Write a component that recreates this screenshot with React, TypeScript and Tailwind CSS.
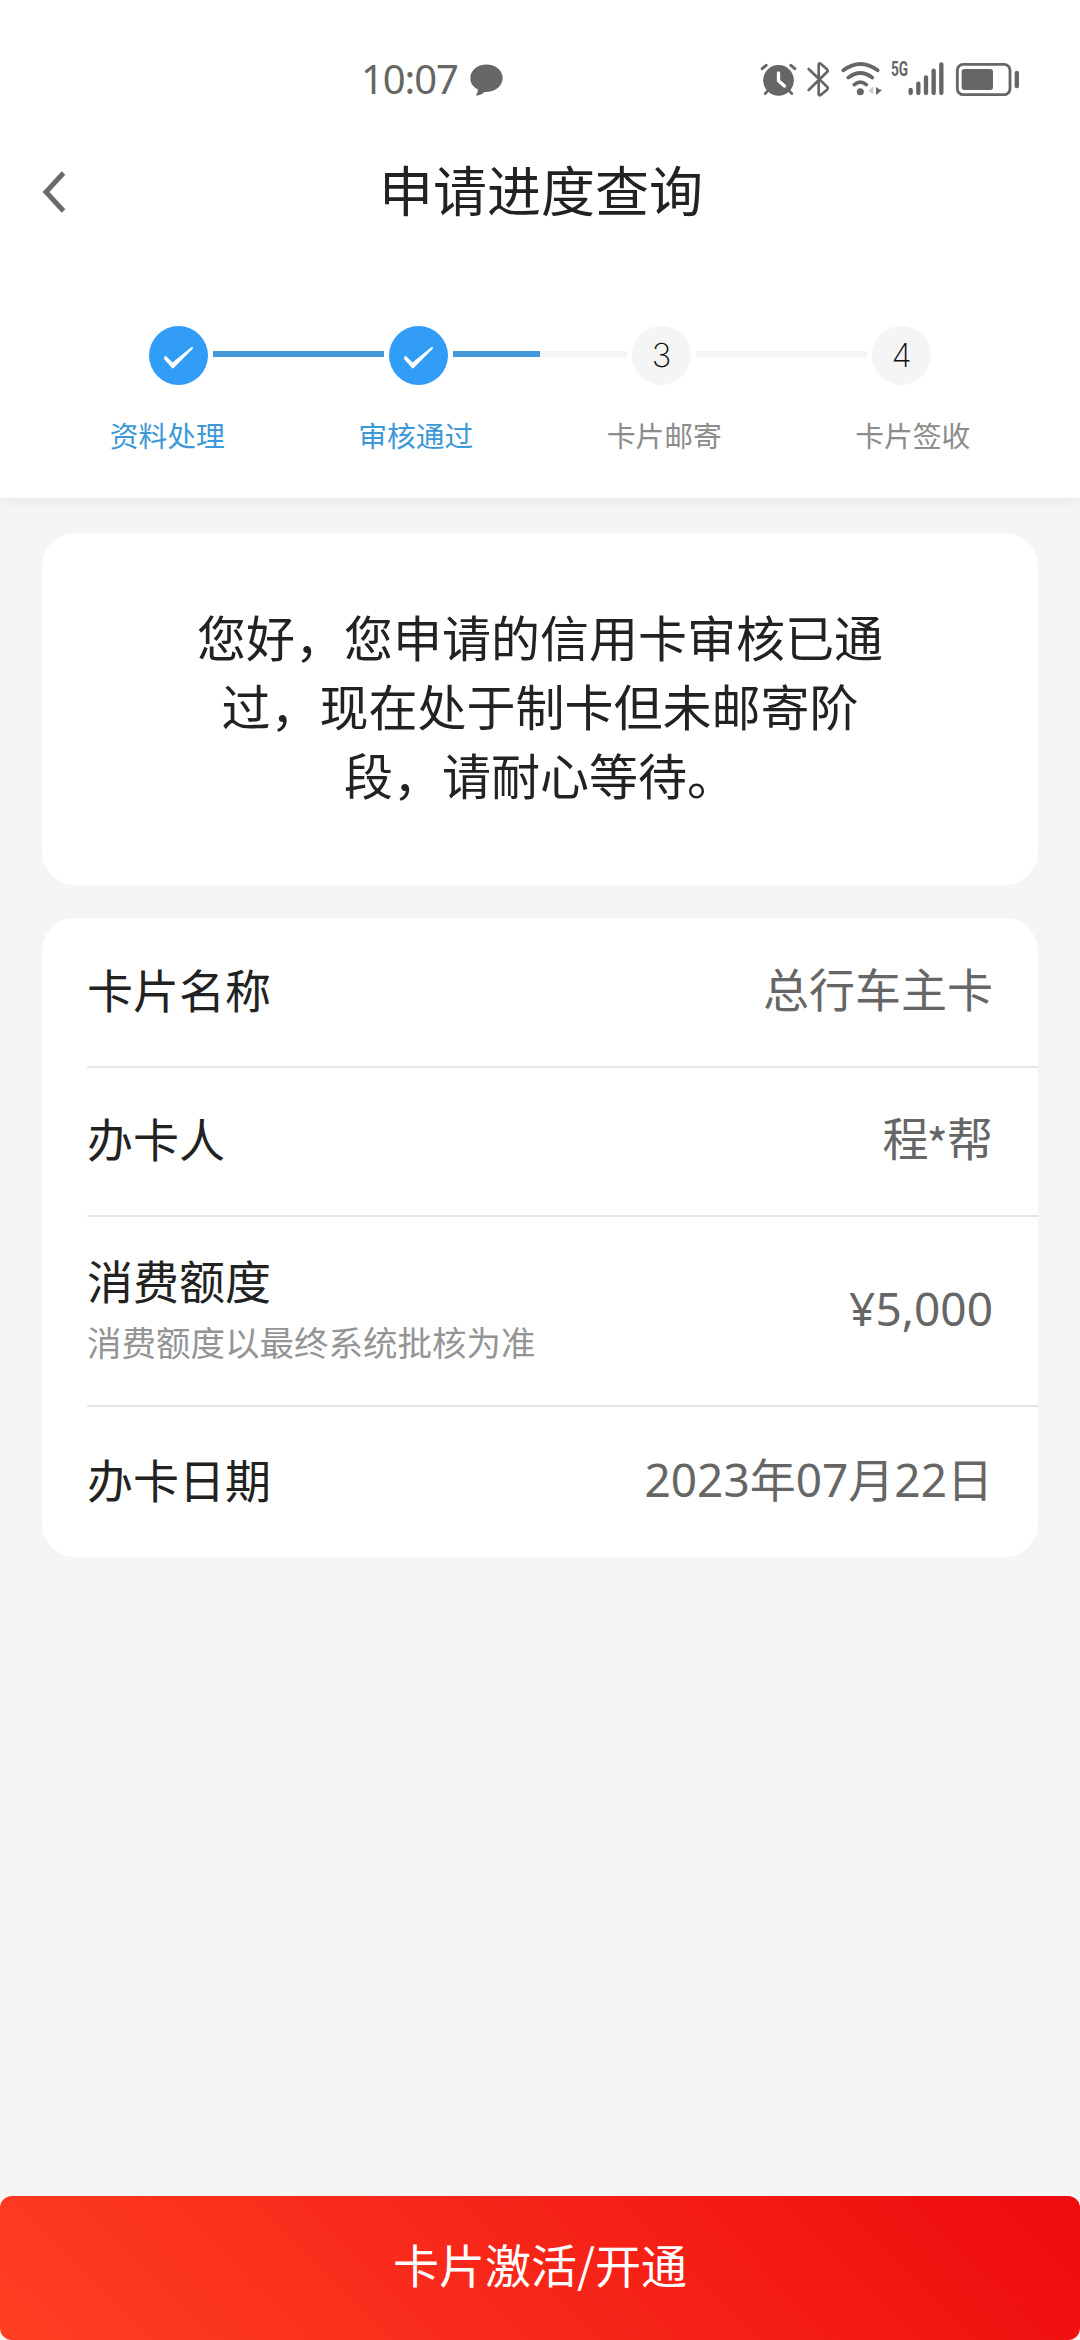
import React from "react";

const CJK = "font-['Noto_Sans_CJK_SC',sans-serif]";

function AlarmIcon() {
  return (
    <svg viewBox="60 60 110 120" className="h-[40px] w-[37px]" fill="none" stroke="#666" strokeLinecap="round">
      <circle cx="115" cy="121" r="46" fill="#666" stroke="none" />
      <path d="M66 86 78 76M164 86 152 76" strokeWidth="9" />
      <path d="M84 151 75 161M146 151 155 161" strokeWidth="8" />
      <path d="M115 99V122L133 138" stroke="#fff" strokeWidth="10" strokeLinejoin="round" />
    </svg>
  );
}

function BluetoothIcon() {
  return (
    <svg viewBox="200 60 75 120" className="ml-[9px] h-[40px] w-[25px]" fill="none" stroke="#666" strokeWidth="8" strokeLinecap="round" strokeLinejoin="round">
      <path d="M208 87 264 141Q267 145 263 149L245 164Q238 169 238 161V75Q238 67 245 72L263 88Q267 92 263 96L208 150" />
    </svg>
  );
}

function WifiIcon() {
  return (
    <svg viewBox="300 60 129 120" className="ml-[9px] h-[40px] w-[43px]" fill="none" stroke="#666" strokeWidth="11" strokeLinecap="round">
      <path d="M310 91Q361 53 413 91M325 113Q361 85 397 113M343 134Q361 119 379 134" />
      <circle cx="361" cy="155" r="10.500" fill="#666" stroke="none" />
      <path d="M400 139V163L385 152Z" fill="#ccc" stroke="none" />
      <path d="M408 141V164L412 163 426 150 418 148Z" fill="#666" stroke="none" />
    </svg>
  );
}

function SignalIcon() {
  return (
    <svg viewBox="500 60 114 120" className="h-[40px] w-[38px]" fill="none" stroke="#666" strokeWidth="13" strokeLinecap="round">
      <path d="M511 150V159M534 131V159M557 112V159M580 92V159M603 73V159" />
    </svg>
  );
}

function BatteryIcon() {
  return (
    <svg viewBox="645 60 195 120" className="ml-[10px] h-[40px] w-[65px]">
      <rect x="652" y="73" width="158" height="91" rx="18" fill="none" stroke="#666" strokeWidth="8.500" />
      <rect x="665" y="87" width="94" height="63" rx="8" fill="#666" />
      <rect x="824" y="92" width="13" height="53" rx="6" fill="#666" />
    </svg>
  );
}

function StatusBar() {
  return (
    <div className="flex h-[160px] items-start justify-between pr-[60px] pl-[361px]">
      <div className="flex items-start pt-[59px]">
        <span className="w-[100px] font-['Noto_Sans'] text-[40px] leading-[40px] tracking-[-1.1px] text-[#666]">10:07</span>
        <svg viewBox="390 70 100 96" className="mt-[5px] ml-[9px] h-[32px] w-[33px]" fill="#666">
          <path d="M440 71C468 71 489 89 489 112S468 154 440 154L434 154Q424 164 409 165Q407 165 409 162Q415 155 414 147C399 139 391 127 391 112C391 89 412 71 440 71Z" />
        </svg>
      </div>
      <div className="flex items-start pt-[60px]">
        <AlarmIcon />
        <BluetoothIcon />
        <WifiIcon />
        <span className="mt-[-1px] ml-[8px] w-[16px] origin-left scale-x-[0.68] font-['Roboto'] text-[20px] leading-[20px] font-bold text-[#666]">5G</span>
        <SignalIcon />
        <BatteryIcon />
      </div>
    </div>
  );
}

function DoneCircle() {
  return (
    <div className="flex size-[59px] shrink-0 items-center justify-center rounded-full bg-[#319df7]">
      <svg viewBox="0 0 59 59" className="size-[59px]" fill="#fff">
        <path d="M15.500 30.500Q16 29.500 17.500 30.500L23.500 36.500 42.500 21Q44 20.500 44.200 22.200L24.500 42.300Q23.800 42.600 23 42L15 33Z" />
      </svg>
    </div>
  );
}

function PendingCircle({ n }: { n: number }) {
  return (
    <div className="flex size-[59px] shrink-0 items-center justify-center rounded-full bg-[#f5f5f5] font-['Inter'] text-[33px] leading-[59px] font-extralight text-[#111]">
      {n}
    </div>
  );
}

function Steps() {
  const labels = ["资料处理", "审核通过", "卡片邮寄", "卡片签收"];
  return (
    <div>
      <div className="flex items-center gap-[5px] pl-[149px]">
        <DoneCircle />
        <div className="mb-[3px] h-[6px] w-[171px] bg-[#4499db]" />
        <DoneCircle />
        <div className="mb-[3px] flex h-[6px] w-[174px] bg-[#f5f5f5]">
          <div className="w-1/2 bg-[#4499db]" />
        </div>
        <PendingCircle n={3} />
        <div className="mb-[3px] h-[6px] w-[171px] bg-[#f5f5f5]" />
        <PendingCircle n={4} />
      </div>
      <div className="mt-[28px] grid grid-cols-4 px-[43px] text-center text-[28.800px] leading-[44px]">
        {labels.map((label, i) => (
          <span key={label} className={i < 2 ? "text-[#3d98d8]" : "text-[#8c8c8c]"}>
            {label}
          </span>
        ))}
      </div>
    </div>
  );
}

interface RowProps {
  label: string;
  note?: string;
  className: string;
  children: React.ReactNode;
}

function Row({ label, note, className, children }: RowProps) {
  return (
    <div className={`flex items-center justify-between border-[#e6e6e6] pr-[45px] ${className}`}>
      <div className={note ? "mb-[5px]" : "mb-[9px]"}>
        <div className="text-[46px] leading-[64px] text-[#222]">{label}</div>
        {note && <div className="text-[34.500px] leading-[60px] text-[#949494]">{note}</div>}
      </div>
      <div className="mb-[7px] font-['Noto_Sans','Noto_Sans_CJK_SC',sans-serif] text-[46px] leading-[64px] text-[#666]">{children}</div>
    </div>
  );
}

export default function App() {
  return (
    <div className={`flex h-[2340px] w-[1080px] flex-col overflow-hidden bg-[#f5f5f5] ${CJK}`}>
      <header className="h-[498px] shrink-0 bg-white shadow-[0_2px_12px_rgba(0,0,0,0.06)]">
        <StatusBar />
        <div className="flex h-[64px] items-center">
          <svg viewBox="0 0 24 42" className="ml-[42px] h-[42px] w-[24px]" fill="none" stroke="#6a6a6a" strokeWidth="5">
            <path d="M21.500 2 4 21 21.500 40" />
          </svg>
          <h1 className="mr-[64px] mb-[6px] flex-1 text-center text-[54px] leading-[64px] text-[#222]">申请进度查询</h1>
        </div>
        <div className="pt-[102px]">
          <Steps />
        </div>
      </header>

      <main className="flex flex-1 flex-col gap-[33px] px-[42px] pt-[35px]">
        <section className="h-[352px] rounded-[33px] bg-white px-[150px] pt-[68px] text-center text-[49px] leading-[69px] text-[#222]">
          您好，您申请的信用卡审核已通过，现在处于制卡但未邮寄阶段，请耐心等待。
        </section>
        <section className="h-[639px] rounded-[33px] bg-white pl-[45px]">
          <Row label="卡片名称" className="h-[150px] border-b-2">总行车主卡</Row>
          <Row label="办卡人" className="h-[149px] border-b-2">
            程<span className="mr-[-1px] ml-[-2px] inline-block translate-y-[7px] font-['Noto_Sans_CJK_SC'] leading-none">*</span>帮
          </Row>
          <Row label="消费额度" note="消费额度以最终系统批核为准" className="h-[190px] border-b-2">¥5,000</Row>
          <Row label="办卡日期" className="h-[150px]">2023年07月22日</Row>
        </section>
      </main>

      <button className="h-[144px] shrink-0 rounded-[12px] bg-[linear-gradient(45deg,#ff3f22_0%,#ee0b0e_100%)] pb-[11px] text-[46px] leading-[64px] text-white">
        卡片激活/开通
      </button>
    </div>
  );
}
